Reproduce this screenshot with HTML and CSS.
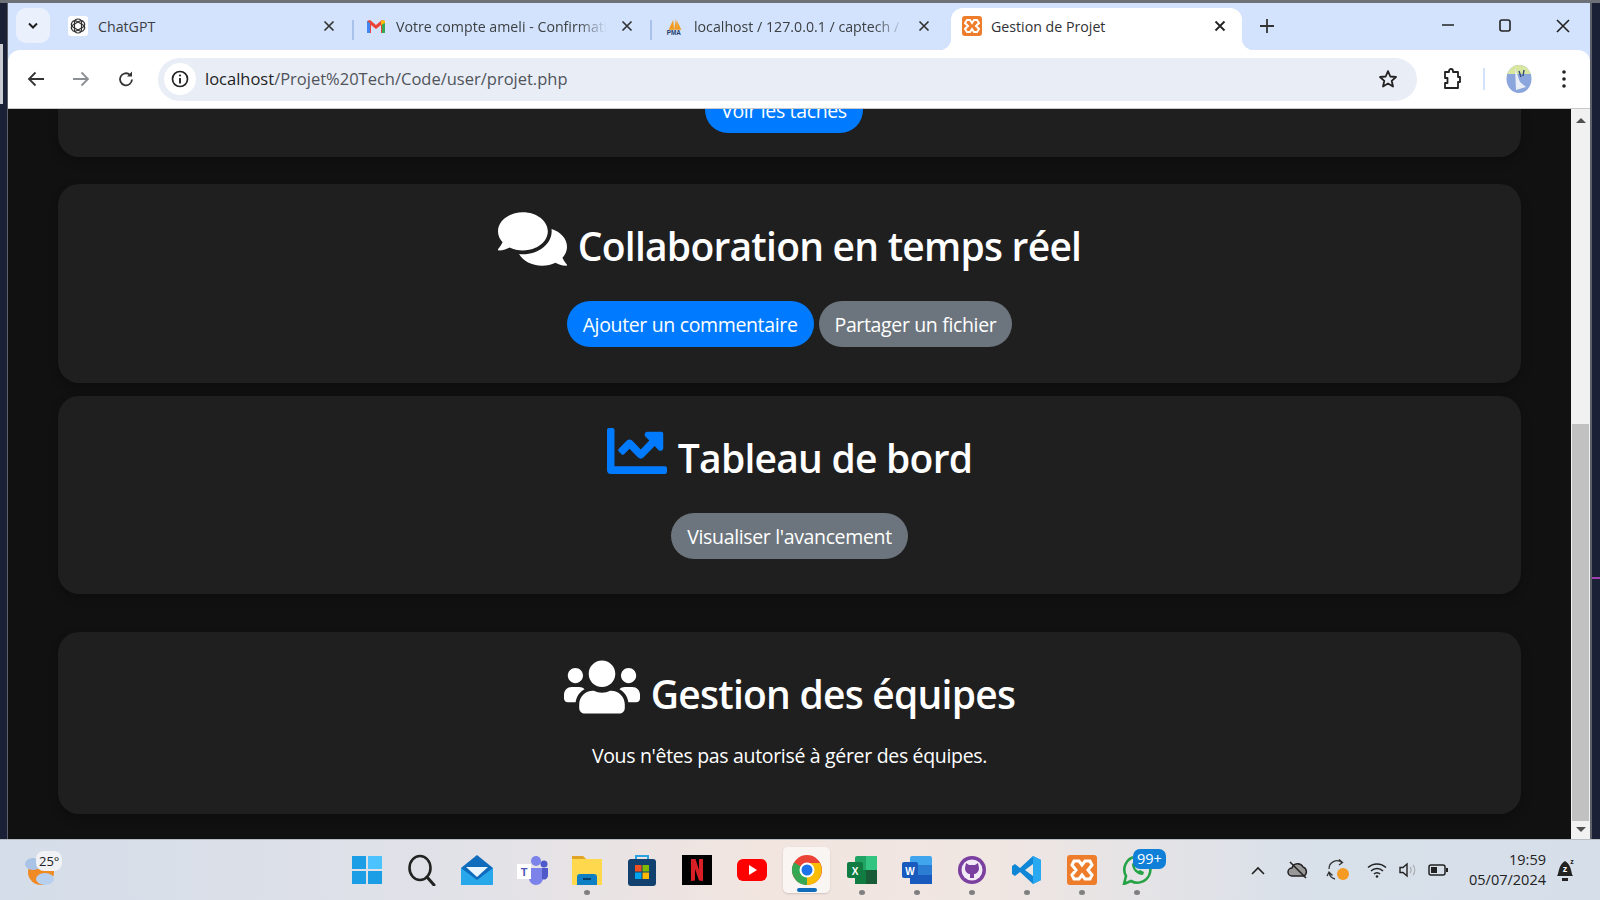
FILE: index.html
```html
<!DOCTYPE html>
<html lang="fr">
<head>
<meta charset="utf-8">
<title>Gestion de Projet</title>
<link rel="stylesheet" href="styles.css">
</head>
<body>
<div class="top-edge"></div>
<div class="shell">
  <div class="desk-left"><span class="desk-block"></span></div>
  <div class="browser">
    <div class="tabbar">
      <button class="tab-menu"><svg width="12" height="8" viewBox="0 0 12 8"><path d="M2 1.500 6 5.500 10 1.500" fill="none" stroke="#1f1f1f" stroke-width="2"/></svg></button>
      <div class="tab tab-1">
        <span class="fav fav-white"><svg width="16" height="16" viewBox="0 0 16 16"><g fill="none" stroke="#333" stroke-width="1.200"><rect x="4.500" y="1" width="7" height="14" rx="3.500"/><rect x="4.500" y="1" width="7" height="14" rx="3.500" transform="rotate(60 8 8)"/><rect x="4.500" y="1" width="7" height="14" rx="3.500" transform="rotate(120 8 8)"/></g></svg></span>
        <span class="tab-title">ChatGPT</span>
        <svg class="tab-x" width="12" height="12" viewBox="0 0 12 12"><path d="M1.500 1.500 10.500 10.500M10.500 1.500 1.500 10.500" stroke="#333" stroke-width="1.700"/></svg>
      </div>
      <span class="tab-sep"></span>
      <div class="tab tab-2">
        <svg class="fav" width="20" height="16" viewBox="0 0 20 16"><path d="M1 15V3l3-1 6 5 6-5 3 1v12h-4V7l-5 4-5-4v8z" fill="#ea4335"/><path d="M1 15V3l3 2v10z" fill="#4285f4"/><path d="M19 15V3l-3 2v10z" fill="#34a853"/><path d="M19 3l-3-1-1 1v4l4-2z" fill="#fbbc04"/></svg>
        <span class="tab-title tab-fade">Votre compte ameli - Confirmation</span>
        <svg class="tab-x" width="12" height="12" viewBox="0 0 12 12"><path d="M1.500 1.500 10.500 10.500M10.500 1.500 1.500 10.500" stroke="#333" stroke-width="1.700"/></svg>
      </div>
      <span class="tab-sep"></span>
      <div class="tab tab-3">
        <svg class="fav" width="22" height="22" viewBox="0 0 22 22"><path d="M4 15 9 4l1 11zM10 15l2-12 2 12zM14 15 13 5l5 10z" fill="#f29b1d"/><text x="2" y="21" class="pma">PMA</text></svg>
        <span class="tab-title tab-fade">localhost / 127.0.0.1 / captech / utilisateur</span>
        <svg class="tab-x" width="12" height="12" viewBox="0 0 12 12"><path d="M1.500 1.500 10.500 10.500M10.500 1.500 1.500 10.500" stroke="#333" stroke-width="1.700"/></svg>
      </div>
      <div class="tab tab-active">
        <svg class="fav" width="20" height="20" viewBox="0 0 20 20"><rect width="20" height="20" rx="3" fill="#ee7d2b"/><path d="M5 4h3l2 3 2-3h3l2 3-3 3 3 3-2 3h-3l-2-3-2 3H5l-2-3 3-3-3-3z" fill="none" stroke="#fff" stroke-width="2"/></svg>
        <span class="tab-title">Gestion de Projet</span>
        <svg class="tab-x" width="12" height="12" viewBox="0 0 12 12"><path d="M1.500 1.500 10.500 10.500M10.500 1.500 1.500 10.500" stroke="#222" stroke-width="1.800"/></svg>
      </div>
      <svg class="new-tab" width="14" height="14" viewBox="0 0 14 14"><path d="M7 0V14M0 7H14" stroke="#333" stroke-width="1.800"/></svg>
      <div class="win-controls">
        <svg width="12" height="12" viewBox="0 0 12 12"><path d="M0 6H12" stroke="#222" stroke-width="1.500"/></svg>
        <svg width="12" height="13" viewBox="0 0 12 13"><rect x="1" y="1" width="10" height="11" rx="2" fill="none" stroke="#222" stroke-width="1.600"/></svg>
        <svg width="14" height="14" viewBox="0 0 14 14"><path d="M1 1 13 13M13 1 1 13" stroke="#222" stroke-width="1.600"/></svg>
      </div>
    </div>
    <div class="toolbar">
      <div class="nav-btns">
        <svg width="18" height="16" viewBox="0 0 18 16"><path d="M17 8H2M8.500 1.500 2 8l6.500 6.500" fill="none" stroke="#333" stroke-width="1.800"/></svg>
        <svg width="18" height="16" viewBox="0 0 18 16"><path d="M1 8H16M9.500 1.500 16 8l-6.500 6.500" fill="none" stroke="#8c8f94" stroke-width="1.800"/></svg>
        <svg width="18" height="18" viewBox="0 0 18 18"><path d="M15 9.500A6 6 0 1 1 13 4.800" fill="none" stroke="#333" stroke-width="1.800"/><path d="M15 1.500V6.500H10z" fill="#333"/></svg>
      </div>
      <div class="omnibox">
        <span class="info-chip"><svg width="18" height="18" viewBox="0 0 18 18"><circle cx="9" cy="9" r="7.500" fill="none" stroke="#222" stroke-width="1.700"/><path d="M9 8V13.500" stroke="#222" stroke-width="1.900"/><circle cx="9" cy="5.500" r="1.100" fill="#222"/></svg></span>
        <span class="url"><span class="url-host">localhost</span>/Projet%20Tech/Code/user/projet.php</span>
        <svg class="star" width="20" height="20" viewBox="0 0 20 20"><path d="M10 2.200 12.300 7.500 18 8 13.700 11.800 15 17.500 10 14.500 5 17.500 6.300 11.800 2 8 7.700 7.500z" fill="none" stroke="#222" stroke-width="1.800" stroke-linejoin="round"/></svg>
      </div>
      <div class="tool-icons">
        <svg width="20" height="22" viewBox="0 0 20 22"><path d="M3 4H7V3a2 2 0 0 1 4 0V4H16V9H18V14H16V20H3V15H5.500V10H3z" fill="none" stroke="#222" stroke-width="1.800" stroke-linejoin="round"/></svg>
        <span class="tool-sep"></span>
        <svg class="avatar" width="26" height="28" viewBox="0 0 26 28"><defs><clipPath id="avatar"><ellipse cx="13" cy="14" rx="12.500" ry="14"/></clipPath></defs><g clip-path="url(#avatar)"><rect width="26" height="28" fill="#8aa6dc"/><rect width="26" height="9" fill="#d8e6a0"/><path d="M9 3 14 17 20 22 10 25z" fill="#e8edf6"/><path d="M13 6 15 12M18 5 17 11" stroke="#39507e" stroke-width="1.500"/></g></svg>
        <svg class="dots" width="4" height="18" viewBox="0 0 4 18"><circle cx="2" cy="2" r="1.800" fill="#222"/><circle cx="2" cy="9" r="1.800" fill="#222"/><circle cx="2" cy="16" r="1.800" fill="#222"/></svg>
      </div>
    </div>
    <div class="viewport">
      <main class="page">
        <section class="card card-clipped"><a class="btn btn-blue btn-offset">Voir les tâches</a></section>
        <section class="card card-collab">
          <h2 class="card-title">
            <svg class="ic-comments" viewBox="0 0 576 512"><path fill="#fff" d="M416 192c0-88.400-93.100-160-208-160S0 103.600 0 192c0 34.300 14.100 65.900 38 92-13.400 30.200-35.500 54.200-35.800 54.500-2.200 2.300-2.800 5.700-1.500 8.700S4.800 352 8 352c36.600 0 66.900-12.300 88.700-25 32.200 15.700 70.300 25 111.300 25 114.900 0 208-71.600 208-160zm122 220c23.900-26 38-57.700 38-92 0-66.900-53.500-124.200-129.300-148.100.9 6.600 1.300 13.300 1.300 20.100 0 105.900-107.700 192-240 192-10.800 0-21.300-.8-31.700-1.900C207.800 439.600 281.800 480 368 480c41 0 79.100-9.200 111.300-25 21.800 12.700 52.100 25 88.700 25 3.200 0 6.100-1.900 7.300-4.800 1.300-2.900.7-6.300-1.500-8.700-.3-.3-22.400-24.200-35.800-54.500z"/></svg>
            Collaboration en temps réel
          </h2>
          <div class="btn-row"><a class="btn btn-blue">Ajouter un commentaire</a><a class="btn btn-gray">Partager un fichier</a></div>
        </section>
        <section class="card card-dash">
          <h2 class="card-title">
            <svg class="ic-chart" viewBox="0 64 512 384" preserveAspectRatio="none"><path fill="#007bff" d="M496 384H64V80c0-8.840-7.160-16-16-16H16C7.160 64 0 71.160 0 80v336c0 17.670 14.330 32 32 32h464c8.840 0 16-7.160 16-16v-32c0-8.840-7.160-16-16-16zM464 96H345.940c-21.380 0-32.090 25.850-16.970 40.970l32.400 32.400L288 242.750l-73.370-73.370c-12.500-12.500-32.760-12.500-45.250 0l-68.690 68.690c-6.250 6.250-6.250 16.380 0 22.630l22.620 22.620c6.250 6.250 16.380 6.250 22.630 0L192 237.250l73.370 73.370c12.500 12.500 32.760 12.500 45.250 0l96-96 32.400 32.400c15.120 15.120 40.970 4.410 40.970-16.970V112c.01-8.840-7.150-16-15.990-16z"/></svg>
            Tableau de bord
          </h2>
          <div class="btn-row"><a class="btn btn-gray">Visualiser l'avancement</a></div>
        </section>
        <section class="card card-team">
          <h2 class="card-title">
            <svg class="ic-users" viewBox="0 32 640 448"><path fill="#fff" d="M96 224c35.300 0 64-28.700 64-64s-28.700-64-64-64-64 28.700-64 64 28.700 64 64 64zm448 0c35.300 0 64-28.700 64-64s-28.700-64-64-64-64 28.700-64 64 28.700 64 64 64zm32 32h-64c-17.600 0-33.500 7.100-45.100 18.600 40.300 22.100 68.900 62 75.100 109.400h66c17.700 0 32-14.300 32-32v-32c0-35.300-28.700-64-64-64zm-256 0c61.900 0 112-50.100 112-112S381.900 32 320 32 208 82.100 208 144s50.100 112 112 112zm76.800 32h-8.300c-20.800 10-43.900 16-68.500 16s-47.600-6-68.500-16h-8.300C179.600 288 128 339.600 128 403.200V432c0 26.500 21.500 48 48 48h288c26.500 0 48-21.500 48-48v-28.800c0-63.600-51.600-115.200-115.200-115.200zm-223.700-13.400C161.500 263.100 145.600 256 128 256H64c-35.300 0-64 28.700-64 64v32c0 17.700 14.300 32 32 32h65.900c6.300-47.400 34.900-87.300 75.200-109.400z"/></svg>
            Gestion des équipes
          </h2>
          <p class="card-text">Vous n'êtes pas autorisé à gérer des équipes.</p>
        </section>
      </main>
      <div class="scrollbar">
        <span class="arrow arrow-up"></span>
        <div class="track"><div class="thumb"></div></div>
        <span class="arrow arrow-down"></span>
      </div>
    </div>
  </div>
  <div class="desk-right"><span class="desk-line"></span></div>
</div>
<footer class="taskbar">
  <div class="weather">
    <svg width="36" height="38" viewBox="0 0 36 38"><circle cx="18" cy="21" r="13" fill="#f08a24"/><ellipse cx="10" cy="13" rx="8" ry="6" fill="#a9c3e6"/><ellipse cx="22" cy="28" rx="9" ry="6" fill="#b7d0ef"/></svg>
    <span class="temp">25°</span>
  </div>
  <div class="apps">
    <span class="app"><svg width="30" height="30" viewBox="0 0 30 30"><path d="M0 1H14V14H0zM16 1H30V14H16zM0 16H14V29H0zM16 16H30V29H16z" fill="#1c9ee6"/><path d="M16 1H30V14H16z" fill="#4cc2ff"/></svg></span>
    <span class="app"><svg width="30" height="32" viewBox="0 0 30 32"><ellipse cx="13" cy="14" rx="10.500" ry="12" fill="none" stroke="#222" stroke-width="2.600"/><path d="M20 23 27 31" stroke="#222" stroke-width="3" stroke-linecap="round"/></svg></span>
    <span class="app"><svg width="32" height="30" viewBox="0 0 32 30"><path d="M16 0 32 13V30H0V13z" fill="#0f6cbd"/><path d="M5 12H27L16 22z" fill="#eaf6ff"/><path d="M0 13 16 25 32 13V30H0z" fill="#28a8ea"/></svg></span>
    <span class="app"><svg width="32" height="30" viewBox="0 0 32 30"><circle cx="20" cy="6" r="5" fill="#7b83eb"/><circle cx="28" cy="9" r="3.500" fill="#5059c9"/><path d="M13 13H27V23a7 7 0 0 1-14 0z" fill="#7b83eb"/><path d="M26 13H32V21a4 4 0 0 1-6 3z" fill="#5059c9"/><rect x="1" y="9" width="14" height="15" fill="#fff"/><text x="8" y="21" class="teams-t">T</text></svg></span>
    <span class="app app-run"><svg width="30" height="30" viewBox="0 0 30 30"><path d="M0 1H11L14 4H30V30H0z" fill="#ffd84d"/><path d="M0 1H11L14 4H0z" fill="#e0a526"/><path d="M5 22a3 3 0 0 1 3-3H22a3 3 0 0 1 3 3V30H5z" fill="#0f7fc4"/><rect x="11" y="23" width="8" height="2" fill="#063f6b"/></svg></span>
    <span class="app"><svg width="30" height="32" viewBox="0 0 30 32"><path d="M9 6V2H21V6" fill="none" stroke="#2aa3e0" stroke-width="2"/><rect x="1" y="5" width="28" height="27" rx="3" fill="#12406f"/><rect x="8" y="11" width="6.500" height="6.500" fill="#f25022"/><rect x="15.500" y="11" width="6.500" height="6.500" fill="#7fba00"/><rect x="8" y="18.500" width="6.500" height="6.500" fill="#00a4ef"/><rect x="15.500" y="18.500" width="6.500" height="6.500" fill="#ffb900"/></svg></span>
    <span class="app"><svg width="30" height="30" viewBox="0 0 30 30"><rect width="30" height="30" fill="#000"/><path d="M9 4H13.500L17 15V4H21V26L17 25.500 13 14V25.500L9 26z" fill="#d81f26"/></svg></span>
    <span class="app"><svg width="30" height="22" viewBox="0 0 30 22"><rect width="30" height="22" rx="6" fill="#f00"/><path d="M12 6 20 11 12 16z" fill="#fff"/></svg></span>
    <span class="app app-active"><svg width="32" height="32" viewBox="0 0 32 32"><circle cx="16" cy="16" r="15" fill="#ea4335"/><path d="M16 16 3 23.500A15 15 0 0 1 3 8.500z" fill="#34a853"/><path d="M16 16 3 23.500A15 15 0 0 0 16 31l13-15z" fill="#34a853"/><path d="M16 9H29A15 15 0 0 1 16 31z" fill="#fbbc04"/><circle cx="16" cy="16" r="7.500" fill="#fff"/><circle cx="16" cy="16" r="5.500" fill="#1a73e8"/></svg></span>
    <span class="app app-run"><svg width="30" height="30" viewBox="0 0 30 30"><rect x="8" y="1" width="22" height="28" rx="2" fill="#21a366"/><rect x="19" y="1" width="11" height="14" fill="#33c481"/><rect x="8" y="15" width="11" height="14" fill="#107c41"/><rect x="19" y="15" width="11" height="14" fill="#185c37"/><rect x="0" y="7" width="16" height="16" rx="2" fill="#107c41"/><text x="8" y="19.500" class="doc-letter">X</text></svg></span>
    <span class="app app-run"><svg width="30" height="30" viewBox="0 0 30 30"><rect x="8" y="1" width="22" height="28" rx="2" fill="#41a5ee"/><rect x="8" y="10" width="22" height="10" fill="#2b7cd3"/><rect x="8" y="20" width="22" height="9" fill="#185abd"/><rect x="0" y="7" width="16" height="16" rx="2" fill="#185abd"/><text x="8" y="19.500" class="doc-letter">W</text></svg></span>
    <span class="app app-run"><svg width="30" height="30" viewBox="0 0 30 30"><circle cx="15" cy="15" r="14" fill="#7b3fa0"/><circle cx="15" cy="15" r="10.500" fill="#f3eaf8"/><path d="M9 8l3 2h6l3-2 1 5c0 4-3 6-5 6v4h-4v-4c-2 0-5-2-5-6z" fill="#7b3fa0"/></svg></span>
    <span class="app app-run"><svg width="30" height="30" viewBox="0 0 30 30"><path d="M21 1 29 5V25L21 29 8 17 3 21 0 19V11L3 9 8 13zM21 9 13 15 21 21z" fill="#0f87d6"/><path d="M21 1 29 5V25L21 29z" fill="#29a9f0"/></svg></span>
    <span class="app app-run"><svg width="30" height="30" viewBox="0 0 30 30"><rect width="30" height="30" rx="3" fill="#ee7d2b"/><path d="M7 6h5l3 4 3-4h5l2 4-4 5 4 5-2 4h-5l-3-4-3 4H7l-2-4 4-5-4-5z" fill="none" stroke="#fff" stroke-width="3"/></svg></span>
    <span class="app app-run"><svg width="30" height="30" viewBox="0 0 30 30"><path d="M2 29 4 21A13 13 0 1 1 9 26z" fill="none" stroke="#25a244" stroke-width="2.600"/><path d="M10 9c0 6 5 11 11 11l1-3-4-2-2 1c-1-1-2-2-3-3l1-2-2-4z" fill="#25a244"/></svg><span class="badge">99+</span></span>
  </div>
  <div class="tray">
    <svg class="t-chev" width="14" height="9" viewBox="0 0 14 9"><path d="M1 8 7 2 13 8" fill="none" stroke="#222" stroke-width="1.600"/></svg>
    <svg class="t-cloud" width="22" height="20" viewBox="0 0 22 20"><path d="M5 16a4 4 0 0 1 0-8 6 6 0 0 1 11-1 5 5 0 0 1 1 9z" fill="#999" stroke="#222" stroke-width="1.500"/><path d="M3 2 19 18" stroke="#222" stroke-width="1.600"/></svg>
    <svg class="t-sync" width="24" height="24" viewBox="0 0 24 24"><path d="M3 11A8 8 0 0 1 16 4.500M13 1.500 16.500 4.500 13 7M9 21A8 8 0 0 1 3 14M6.500 17.500 3 14 1 18" fill="none" stroke="#333" stroke-width="1.300"/><circle cx="17" cy="16" r="6" fill="#f59a23"/></svg>
    <svg class="t-wifi" width="20" height="16" viewBox="0 0 20 16"><path d="M1 5.500A13 13 0 0 1 19 5.500M4 9A8.500 8.500 0 0 1 16 9M7 12A4 4 0 0 1 13 12" fill="none" stroke="#222" stroke-width="1.500"/><circle cx="10" cy="14.500" r="1.300" fill="#222"/></svg>
    <svg class="t-vol" width="20" height="16" viewBox="0 0 20 16"><path d="M1 5.500H4L8 2V14L4 10.500H1z" fill="none" stroke="#222" stroke-width="1.400"/><path d="M11 5a5 5 0 0 1 0 6M14 3a8 8 0 0 1 0 10" fill="none" stroke="#aaa" stroke-width="1.200"/></svg>
    <svg class="t-bat" width="20" height="12" viewBox="0 0 20 12"><rect x="1" y="1" width="16" height="10" rx="2" fill="none" stroke="#222" stroke-width="1.500"/><rect x="3" y="3" width="6" height="6" fill="#222"/><rect x="18" y="4" width="2" height="4" fill="#222"/></svg>
    <div class="clock"><span>19:59</span><span>05/07/2024</span></div>
    <svg class="t-bell" width="20" height="26" viewBox="0 0 20 26"><path d="M2 19C4 17 3 8 10 4 17 8 16 17 18 19z" fill="#222"/><rect x="7" y="21" width="6" height="3" fill="#222"/><text x="10" y="15" class="bell-z">z</text><text x="17" y="7" class="bell-zz">z</text></svg>
  </div>
</footer>
</body>
</html>
```

FILE: styles.css
```css
* { box-sizing: border-box; }
html, body { margin: 0; height: 900px; overflow: hidden; }
body { display: flex; flex-direction: column; font-family: "Open Sans", "Noto Sans", sans-serif; background: #1a2035; }
.top-edge { height: 3px; background: #6e7278; flex: none; }
.shell { flex: 1; display: flex; min-height: 0; }
.desk-left { width: 8px; flex: none; background: #1a2035; border-right: 1px solid #5d6068; padding-top: 41px; }
.desk-block { display: block; width: 3px; height: 60px; background: #c9ccd3; }
.browser { width: 1582px; flex: none; display: flex; flex-direction: column; background: #d3e3fd; }
.desk-right { flex: 1; background: #1a2035; border-left: 2px solid #5d6068; display: flex; flex-direction: column; padding-top: 574px; }
.desk-line { height: 2px; background: #a23fb0; }

.tabbar { height: 47px; flex: none; display: flex; align-items: flex-start; padding: 5px 0 0 8px; }
.tab-menu { width: 34px; height: 35px; border: 0; border-radius: 10px; background: #eaf1fd; display: flex; align-items: center; justify-content: center; padding: 0; }
.tab { height: 42px; display: flex; align-items: center; font-size: 14.200px; color: #3c4043; padding-bottom: 6px; }
.tab-1 { width: 302px; padding-left: 18px; }
.tab-2 { width: 296px; padding-left: 12px; }
.tab-3 { width: 299px; padding-left: 13px; }
.tab-active { width: 291px; padding-left: 11px; background: #fff; border-radius: 12px 12px 0 0; color: #303134; position: relative; }
.tab-active::before, .tab-active::after { content: ""; position: absolute; bottom: 0; width: 12px; height: 12px; }
.tab-active::before { left: -12px; background: radial-gradient(circle at 0 0, transparent 12px, #fff 12.500px); }
.tab-active::after { right: -12px; background: radial-gradient(circle at 100% 0, transparent 12px, #fff 12.500px); }
.fav { flex: none; width: 20px; height: 20px; display: flex; align-items: center; justify-content: center; }
.fav-white { background: #fff; border-radius: 3px; }
.tab-title { margin-left: 10px; flex: 1; min-width: 0; white-space: nowrap; overflow: hidden; }
.tab-3 .tab-title, .tab-active .tab-title { margin-left: 9px; }
.tab-fade { -webkit-mask-image: linear-gradient(90deg, #000 86%, transparent); mask-image: linear-gradient(90deg, #000 86%, transparent); }
.tab-x { flex: none; margin-left: 14px; }
.tab-1 .tab-x, .tab-2 .tab-x { margin-right: 17px; }
.tab-3 .tab-x { margin-right: 21px; }
.tab-active .tab-x { margin-right: 16px; }
.tab-sep { width: 2px; height: 20px; margin-top: 12px; background: #a9c2ec; flex: none; }
.pma { font: 700 7px "Liberation Sans", sans-serif; fill: #1d3c6e; }
.new-tab { margin: 11px 0 0 18px; flex: none; }
.win-controls { margin-left: auto; width: 128px; margin-right: 20px; padding-top: 11px; display: flex; justify-content: space-between; }

.toolbar { height: 59px; flex: none; background: #fff; border-radius: 12px 12px 0 0; display: flex; align-items: center; border-bottom: 1px solid #c7c9cc; }
.nav-btns { width: 150px; flex: none; padding: 0 23px 0 19px; display: flex; justify-content: space-between; align-items: center; }
.omnibox { width: 1259px; height: 43px; flex: none; border-radius: 22px; background: #e9edf6; display: flex; align-items: center; }
.info-chip { width: 32px; height: 32px; margin-left: 6px; border-radius: 50%; background: #fff; display: flex; align-items: center; justify-content: center; flex: none; }
.url { margin: 0 0 2px 9px; font-size: 16.500px; color: #50545a; white-space: nowrap; }
.url-host { color: #1f1f1f; }
.star { margin-left: auto; margin-right: 19px; }
.tool-icons { flex: 1; display: flex; align-items: center; padding-left: 25px; }
.tool-sep { width: 2px; height: 22px; background: #d3e3fd; margin: 0 21px; }
.dots { margin-left: 30px; }

.viewport { flex: 1; min-height: 0; display: flex; }
.page { flex: 1; min-width: 0; overflow: hidden; background: #111; padding: 0 50px; display: flex; flex-direction: column; color: #fff; }
.card { background: #1f1f1f; border-radius: 21px; box-shadow: 0 4px 10px rgba(0,0,0,.25); display: flex; flex-direction: column; align-items: center; flex: none; }
.card-clipped { height: 48px; margin-bottom: 27px; border-radius: 0 0 21px 21px; justify-content: flex-end; padding: 0 0 24px; overflow: hidden; }
.card-collab { height: 199px; margin-bottom: 13px; padding-top: 30px; }
.card-dash { height: 198px; margin-bottom: 38px; padding-top: 30px; }
.card-team { height: 182px; padding-top: 30px; }
.card-title { margin: 0; height: 64px; font-size: 39px; font-weight: 600; line-height: 64px; letter-spacing: -.76px; display: flex; align-items: flex-end; white-space: nowrap; }
.ic-comments { width: 69px; height: 62px; margin: 0 11px 8px 0; }
.ic-chart { width: 60px; height: 46px; margin: 0 11px 16px 0; }
.ic-users { width: 76px; height: 54px; margin: 0 11px 12px 0; }
.btn-row { display: flex; gap: 5px; }
.card-collab .btn-row { margin-top: 23px; }
.card-dash .btn-row { margin-top: 23px; }
.btn { height: 46px; flex: none; padding: 0 16px; border-radius: 23px; font-size: 19.500px; letter-spacing: -.35px; line-height: 48px; color: #fff; white-space: nowrap; display: block; }
.btn-blue { background: #007bff; }
.btn-gray { background: #6c757d; }
.btn-offset { margin-right: 11px; }
.card-text { margin: 15px 0 0; font-size: 19.500px; letter-spacing: -.32px; line-height: 30px; }

.scrollbar { width: 19px; flex: none; background: #f1f1f1; display: flex; flex-direction: column; align-items: center; }
.arrow { width: 0; height: 0; border-left: 5px solid transparent; border-right: 5px solid transparent; flex: none; }
.arrow-up { border-bottom: 5px solid #505050; margin: 9px 0 6px; }
.arrow-down { border-top: 5px solid #505050; margin: 6px 0 7px; }
.track { flex: 1; width: 100%; padding: 295px 1px 0; min-height: 0; }
.thumb { height: 100%; background: #c1c1c1; }

.taskbar { height: 61px; flex: none; position: relative; display: flex; align-items: center; background: linear-gradient(90deg, #d4dde9 0%, #e2e2e8 30%, #f2e5df 48%, #f0e6e2 62%, #d8e0ea 82%, #d6dee9 100%); border-top: 1px solid #b8bcc3; }
.weather { width: 339px; flex: none; padding-left: 23px; display: flex; align-items: center; }
.temp { margin: -18px 0 0 -23px; padding: 0 3px; background: #f0f2f5; border-radius: 8px; font-size: 13px; line-height: 20px; color: #222; }
.apps { display: flex; flex: none; align-items: center; }
.app { width: 55px; height: 50px; flex: none; display: flex; align-items: center; justify-content: center; position: relative; }
.app-run::after { content: ""; position: absolute; bottom: 0; left: 25px; width: 6px; height: 5px; border-radius: 50%; background: #7f7f7f; }
.app-active { width: 47px; height: 46px; margin: 0 4px; background: rgba(255,255,255,.6); border-radius: 5px; box-shadow: 0 1px 2px rgba(0,0,0,.15); }
.app-active::after { content: ""; position: absolute; bottom: 1px; left: 14px; width: 20px; height: 4px; border-radius: 2px; background: #0f6cbd; }
.badge { position: absolute; left: 24px; top: 4px; background: #0f7fd8; color: #fff; font-size: 14.500px; line-height: 20px; padding: 0 4px; border-radius: 7px; }
.teams-t { font: 700 11px "Liberation Sans", sans-serif; fill: #4b53bc; text-anchor: middle; }
.doc-letter { font: 700 10px "Liberation Sans", sans-serif; fill: #fff; text-anchor: middle; }
.bell-z { font: 700 9px "Liberation Sans", sans-serif; fill: #fff; text-anchor: middle; }
.bell-zz { font: 700 7px "Liberation Sans", sans-serif; fill: #222; text-anchor: middle; }
.tray { flex: 1; display: flex; align-items: center; padding-left: 87px; }
.t-chev { margin-right: 22px; }
.t-cloud { margin-right: 17px; }
.t-sync { margin-right: 17px; }
.t-wifi { margin-right: 12px; }
.t-vol { margin-right: 9px; }
.clock { margin-left: 11px; width: 87px; display: flex; flex-direction: column; align-items: flex-end; font-size: 14.500px; line-height: 20px; color: #222; white-space: nowrap; }
.t-bell { margin-left: 9px; }
```
